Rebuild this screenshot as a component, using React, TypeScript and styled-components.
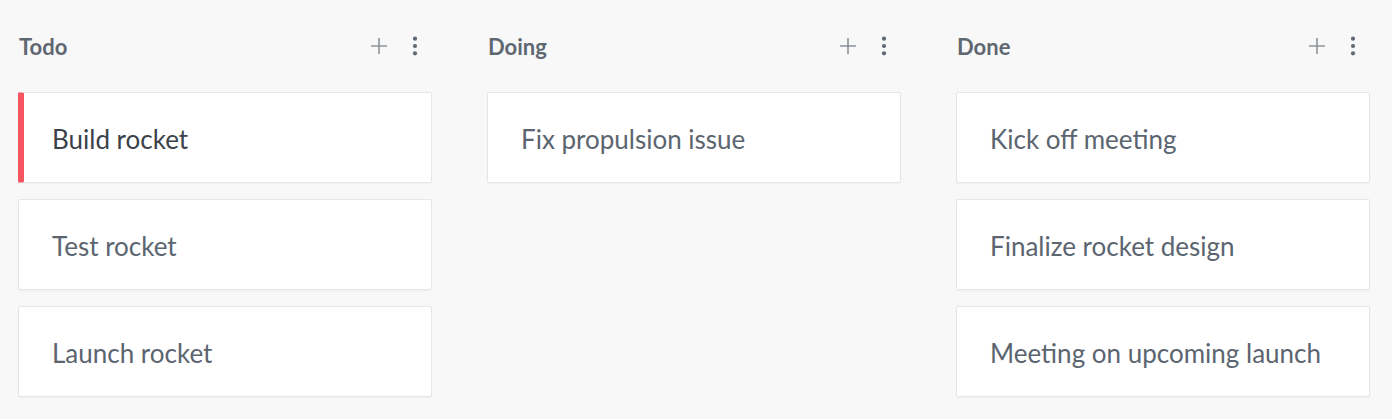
import React from 'react'
import styled, { createGlobalStyle } from 'styled-components'

type Task = {
  id: number
  title: string
  active?: boolean
}

type Lane = {
  name: string
  tasks: Task[]
}

const lanes: Lane[] = [
  {
    name: 'Todo',
    tasks: [
      { id: 1, title: 'Build rocket', active: true },
      { id: 2, title: 'Test rocket' },
      { id: 3, title: 'Launch rocket' },
    ],
  },
  {
    name: 'Doing',
    tasks: [{ id: 4, title: 'Fix propulsion issue' }],
  },
  {
    name: 'Done',
    tasks: [
      { id: 5, title: 'Kick off meeting' },
      { id: 6, title: 'Finalize rocket design' },
      { id: 7, title: 'Meeting on upcoming launch' },
    ],
  },
]

const GlobalStyle = createGlobalStyle`
  html, body {
    margin: 0;
    padding: 0;
    background: #f8f8f8;
    font-family: Lato, 'Liberation Sans', sans-serif;
  }
`

const PlusIcon = () => (
  <svg width="18" height="18" viewBox="0 0 18 18">
    <path d="M9 1v16M1 9h16" stroke="#8b929a" strokeWidth="1.6" fill="none" />
  </svg>
)

const MoreIcon = () => (
  <svg width="6" height="20" viewBox="0 0 6 20">
    <circle cx="3" cy="2.7" r="2.1" fill="#5f6871" />
    <circle cx="3" cy="10" r="2.1" fill="#5f6871" />
    <circle cx="3" cy="17.3" r="2.1" fill="#5f6871" />
  </svg>
)

const TaskCard = ({ task }: { task: Task }) => (
  <Card active={task.active}>
    <CardTitle active={task.active}>{task.title}</CardTitle>
  </Card>
)

export default function App() {
  return (
    <>
      <GlobalStyle />
      <Board>
        {lanes.map((lane) => (
          <Column key={lane.name}>
            <ColumnHeader>
              <ColumnTitle>{lane.name}</ColumnTitle>
              <HeaderActions>
                <IconButton aria-label="Add task">
                  <PlusIcon />
                </IconButton>
                <IconButton aria-label="More">
                  <MoreIcon />
                </IconButton>
              </HeaderActions>
            </ColumnHeader>
            <CardList>
              {lane.tasks.map((t) => (
                <TaskCard task={t} key={t.id} />
              ))}
            </CardList>
          </Column>
        ))}
      </Board>
    </>
  )
}

const Board = styled.div`
  display: flex;
  gap: 55px;
  padding: 30px 22px 20px 18px;
  box-sizing: border-box;
  width: 1392px;
  height: 419px;
`

const Column = styled.div`
  width: 414px;
  flex-shrink: 0;
  display: flex;
  flex-direction: column;
`

const ColumnHeader = styled.div`
  height: 32px;
  display: flex;
  align-items: center;
  justify-content: space-between;
  padding: 0 14px 0 1px;
  margin-bottom: 30px;
`

const ColumnTitle = styled.h2`
  margin: 0;
  font-size: 22px;
  font-weight: 700;
  color: #5f6871;
`

const HeaderActions = styled.div`
  display: flex;
  align-items: center;
  gap: 24px;
`

const IconButton = styled.button`
  border: none;
  background: transparent;
  padding: 0;
  margin: 0;
  display: flex;
  align-items: center;
  justify-content: center;
  cursor: pointer;
`

const CardList = styled.div`
  display: flex;
  flex-direction: column;
  gap: 16px;
`

const Card = styled.div<{ active?: boolean }>`
  height: 91px;
  box-sizing: border-box;
  background: #ffffff;
  border: 1px solid #e6e6e6;
  border-left: ${(p) => (p.active ? '6px solid #f7555f' : '1px solid #e6e6e6')};
  border-radius: 2px;
  box-shadow: 0 1px 2px rgba(0, 0, 0, 0.04);
  display: flex;
  align-items: center;
  padding-top: 2px;
  padding-left: ${(p) => (p.active ? '28px' : '33px')};
`

const CardTitle = styled.span<{ active?: boolean }>`
  font-size: 26px;
  color: ${(p) => (p.active ? '#3b4249' : '#5b6570')};
`
